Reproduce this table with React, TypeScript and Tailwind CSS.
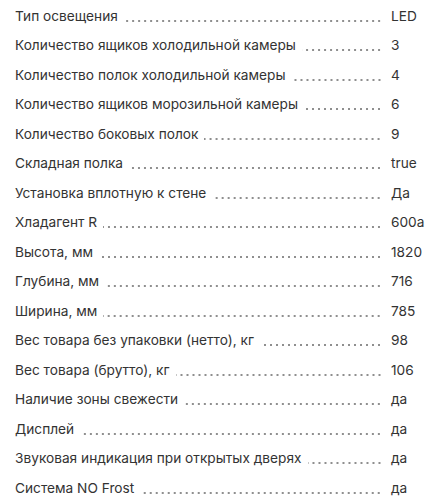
import React from "react";

const rows: [string, string][] = [
  ["Тип освещения", "LED"],
  ["Количество ящиков холодильной камеры", "3"],
  ["Количество полок холодильной камеры", "4"],
  ["Количество ящиков морозильной камеры", "6"],
  ["Количество боковых полок", "9"],
  ["Складная полка", "true"],
  ["Установка вплотную к стене", "Да"],
  ["Хладагент R", "600a"],
  ["Высота, мм", "1820"],
  ["Глубина, мм", "716"],
  ["Ширина, мм", "785"],
  ["Вес товара без упаковки (нетто), кг", "98"],
  ["Вес товара (брутто), кг", "106"],
  ["Наличие зоны свежести", "да"],
  ["Дисплей", "да"],
  ["Звуковая индикация при открытых дверях", "да"],
  ["Система NO Frost", "да"],
];

export default function App() {
  return (
    <div className="w-[431px] h-[500px] overflow-hidden bg-white pl-[15px] font-['Inter',sans-serif] text-[13.7px] text-[#333]">
      {rows.map(([k, v]) => (
        <div key={k} className="flex items-end odd:h-[30px] even:h-[29px] first:h-[28px]">
          <span className="whitespace-nowrap pb-[5px] leading-[17px]">{k}</span>
          <span className="flex-1 ml-[6px] mr-[8px] mb-[8px] h-[2px] bg-[linear-gradient(to_right,#8f8f8f_2px,transparent_2px)] bg-[length:6px_2px] bg-repeat bg-fixed" />
          <span className="w-[40px] shrink-0 whitespace-nowrap pb-[5px] leading-[17px]">{v}</span>
        </div>
      ))}
    </div>
  );
}
